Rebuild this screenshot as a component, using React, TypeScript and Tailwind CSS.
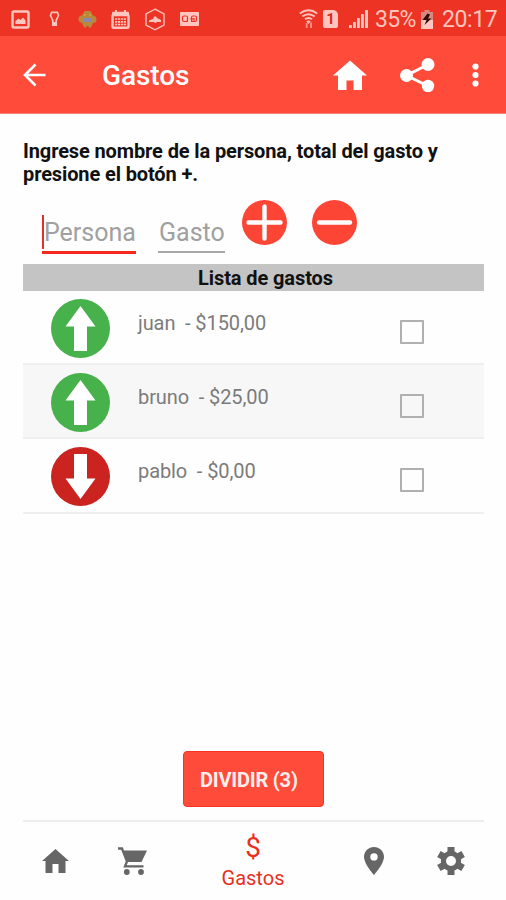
import { useState, type ReactNode } from 'react'
import clsx from 'clsx'

interface Expense {
  id: number
  name: string
  amount: string
  paid: boolean
}

const EXPENSES: Expense[] = [
  { id: 1, name: 'juan', amount: '$150,00', paid: true },
  { id: 2, name: 'bruno', amount: '$25,00', paid: true },
  { id: 3, name: 'pablo', amount: '$0,00', paid: false },
]

function StatusBar() {
  return (
    <div className="flex h-9 items-center bg-[#ed3323] pt-0.5 text-[#ffc5be]">
      {/* Notifications */}
      <svg className="ml-[11px] h-[19px] w-[19px]" viewBox="0 0 19 19">
        <rect x="1.5" y="1.5" width="16" height="16" rx="1.5" fill="none" stroke="currentColor" strokeWidth="2.4" />
        <path d="M4.5 14V11l3-2.5 2 1.5 2.5-2.5 2.5 3V14z" fill="currentColor" />
      </svg>
      <svg className="ml-[19px] h-4 w-[11px]" viewBox="0 0 11 16">
        <path d="M1.5 4.5 2.6 1.3h5.8l1.1 3.2-2.3 5v4.7H3.8V9.5z" fill="none" stroke="currentColor" strokeWidth="1.7" />
        <path d="M4 11h3v3H4z" fill="currentColor" />
      </svg>
      <svg className="ml-[18px] h-[19px] w-[19px]" viewBox="0 0 19 19">
        <path
          d="M6.5 1h6l2.500 4.500q3.500 0.500 3.500 4t-3.500 3.500l-2 4.500h-2.500V16h-2v1.500H6L4 13Q0.500 12.500 0.500 9T4 5.500z"
          fill="#b8893a"
        />
        <rect x="6" y="8" width="7" height="4" fill="#8d86ae" />
        <circle cx="7" cy="5" r="1" fill="#d7a63a" />
        <circle cx="12" cy="5" r="1" fill="#d7a63a" />
      </svg>
      <svg className="ml-[14px] h-[19px] w-[19px]" viewBox="0 0 19 19">
        <path
          d="M1 5.5V3q0-1.200 1.200-1.200H4V0h2v1.800h7V0h2v1.800h1.800Q18 1.800 18 3v2.500z"
          fill="currentColor"
        />
        <rect x="1.500" y="5" width="16" height="12.800" rx="1" fill="none" stroke="currentColor" strokeWidth="2.400" />
        <path d="M4 9h11M4 11.800h11M4 14.500h11" stroke="currentColor" strokeWidth="1.700" strokeDasharray="2.300 0.700" />
      </svg>
      <svg className="ml-[14px] h-[23px] w-[22px]" viewBox="0 0 22 23">
        <path d="M11 1.200 20 6v11l-9 4.800L2 17V6z" fill="none" stroke="currentColor" strokeWidth="1.400" />
        <path d="M5 12.500l4-1.500 1-2.500h2l1 1.500 4 2v2h-4l-1.500 1-2-1H5z" fill="currentColor" />
      </svg>
      <svg className="ml-[14px] h-[14px] w-[19px]" viewBox="0 0 19 14">
        <rect width="19" height="14" rx="0.800" fill="currentColor" />
        <g fill="none" stroke="#ed3323" strokeWidth="1.200">
          <rect x="2.500" y="4" width="5" height="5.500" rx="1.500" />
          <rect x="11.500" y="4" width="5" height="5.500" rx="1.500" />
          <path d="M5 9.500h3M11 9.500h3M14 6v3M10.500 6.800h4" />
        </g>
      </svg>

      {/* System icons */}
      <svg className="ml-auto h-5 w-[19px]" viewBox="0 0 19 20">
        <g fill="none" stroke="currentColor" strokeWidth="2">
          <path d="M0.800 4.500q8.700-6.500 17.400 0M3.300 7.500q6.200-4.600 12.400 0M6 10.300q3.500-2.600 7 0" />
        </g>
        <path d="M7.300 12.300q2.200-1.600 4.400 0L9.500 15z" fill="currentColor" />
        <path d="M7.700 14v5M12 13.500v5.500" stroke="currentColor" strokeWidth="2" opacity="0.600" />
      </svg>
      <div className="ml-[5px] flex h-[18px] w-[15px] items-center justify-center rounded-[2px] rounded-tr-[5px] bg-current">
        <span className="text-[15px] leading-none font-bold text-[#d92a1c]">1</span>
      </div>
      <svg className="ml-[11px] h-[18px] w-[19px]" viewBox="0 0 19 18">
        <path d="M0 15h2.800v3H0zM4 12h2.800v6H4zM8 8h2.800v10H8zM12 4h2.800v14H12zM16 0h3v18h-3z" fill="currentColor" />
      </svg>
      <span className="ml-[7px] w-[42px] text-[23px] leading-none tracking-[-0.700px]">35%</span>
      <svg className="ml-[4px] h-[19px] w-[12px]" viewBox="0 0 12 19">
        <path d="M3.500 0h5v2H12v8H0V2h3.500z" fill="#d8887e" />
        <path d="M0 10h12v9H0z" fill="currentColor" />
        <path d="M6.500 3.500 1.500 10h4L3.500 15l7-6.500H7l2-4z" fill="#2c0c08" />
      </svg>
      <span className="mr-[8px] ml-[9px] w-[56px] text-[23px] leading-none tracking-[-0.400px]">20:17</span>
    </div>
  )
}

function Header() {
  return (
    <header className="flex h-[78px] items-center border-b border-[#fb8175] bg-[#ff4b3a] text-white">
      <svg className="ml-[23px] h-6 w-6" viewBox="0 0 24 24">
        <path d="M12.500 1.500 2 12l10.500 10.500M2 12h20.500" fill="none" stroke="currentColor" strokeWidth="2.600" />
      </svg>
      <h1 className="ml-[55px] pt-[3px] text-[28px] leading-none font-medium tracking-[-0.100px]">Gastos</h1>
      <svg className="ml-auto h-[30px] w-[34px]" viewBox="0 0 34 30">
        <path d="M17 0.500 34 15.500h-5V30h-8.500V20.500h-7V30H5V15.500H0z" fill="currentColor" />
      </svg>
      <svg className="ml-[33px] h-[34px] w-[35px]" viewBox="0 0 35 34">
        <path d="M28 6.500 6.500 17.500 28 28" fill="none" stroke="currentColor" strokeWidth="3" />
        <circle cx="28" cy="6.500" r="6.500" fill="currentColor" />
        <circle cx="6.500" cy="17.500" r="6.500" fill="currentColor" />
        <circle cx="28" cy="28" r="6.200" fill="currentColor" />
      </svg>
      <svg className="mr-[27px] ml-[37px] h-6 w-[7px]" viewBox="0 0 7 24">
        <circle cx="3.500" cy="3.500" r="3.100" fill="currentColor" />
        <circle cx="3.500" cy="12" r="3.100" fill="currentColor" />
        <circle cx="3.500" cy="20.500" r="3.100" fill="currentColor" />
      </svg>
    </header>
  )
}

function RoundButton({ label, d }: { label: string; d: string }) {
  return (
    <button aria-label={label} className="h-[45px] w-[45px] shrink-0">
      <svg className="h-full w-full" viewBox="0 0 45 45">
        <circle cx="22.500" cy="22.500" r="22.500" fill="#fc4535" />
        <path d={d} stroke="#fff" strokeWidth="4.400" strokeLinecap="round" />
      </svg>
    </button>
  )
}

function ExpenseRow({ expense, checked, onToggle }: { expense: Expense; checked: boolean; onToggle: () => void }) {
  return (
    <li className="flex h-[74.200px] border-b-2 border-[#efefef] even:bg-[#f7f7f7]">
      <svg className={clsx('mt-[8px] ml-[28px] h-[59px] w-[59px]', !expense.paid && 'rotate-180')} viewBox="0 0 59 59">
        <circle cx="29.500" cy="29.500" r="29.500" fill={expense.paid ? '#47b14b' : '#cb231f'} />
        <path d="M29.500 7 44.500 27.500H36V52H23V27.500h-8.500z" fill="#fff" />
      </svg>
      <span className="mt-[20px] ml-[28px] w-[262px] text-[20px] leading-6 tracking-[-0.100px] whitespace-pre text-[#7b7b7b]">
        {expense.name}  - {expense.amount}
      </span>
      <button
        role="checkbox"
        aria-checked={checked}
        aria-label={expense.name}
        onClick={onToggle}
        className={clsx('mt-[29px] h-6 w-6 rounded-[1px] border-2 border-[#b0b0b0]', checked && 'bg-[#fc4535]')}
      />
    </li>
  )
}

function NavItem({ label, children }: { label: string; children: ReactNode }) {
  return (
    <button aria-label={label} className="flex w-[77px] items-center justify-center text-[#666]">
      {children}
    </button>
  )
}

export default function App() {
  const [selected, setSelected] = useState<number[]>([])

  const toggle = (id: number) => {
    setSelected(s => (s.includes(id) ? s.filter(x => x !== id) : [...s, id]))
  }

  return (
    <div className="flex h-[900px] w-[506px] flex-col overflow-hidden bg-[#fefefe] font-['Roboto',sans-serif]">
      <StatusBar />
      <Header />

      <main className="mr-[22px] ml-[23px] flex flex-1 flex-col">
        <p className="mt-[26px] text-[20px] leading-[23px] font-bold tracking-[-0.120px] whitespace-pre text-[#111]">
          Ingrese nombre de la persona, total del gasto y{'\n'}presione el botón +.
        </p>

        {/* New expense */}
        <div className="mt-[14px] flex h-[64px] items-start pl-[19px]">
          <div className="mt-[14px] flex h-[40px] w-[94px] items-start border-b-[3px] border-[#f5281e] text-[25px] leading-[38px] text-[#a0a0a0]">
            <span className="mt-[1px] h-[34px] w-[2px] shrink-0 bg-[#e0302c]" />
            <span>Persona</span>
          </div>
          <div className="mt-[14px] ml-[22px] h-[39px] w-[67px] border-b-2 border-[#a8a8a8] pl-[1px] text-[25px] leading-[38px] text-[#a0a0a0]">
            Gasto
          </div>
          <div className="ml-[17px] flex gap-[25px]">
            <RoundButton label="Agregar" d="M6.500 22.500h32M22.500 6.500v32" />
            <RoundButton label="Quitar" d="M7 22.500h31" />
          </div>
        </div>

        <h2 className="h-[27px] bg-[#c4c4c4] pl-[24px] text-center text-[20px] leading-[29px] font-bold tracking-[-0.100px] text-[#111]">
          Lista de gastos
        </h2>
        <ul>
          {EXPENSES.map(e => (
            <ExpenseRow key={e.id} expense={e} checked={selected.includes(e.id)} onToggle={() => toggle(e.id)} />
          ))}
        </ul>

        <button className="mt-auto mb-[13px] ml-[160px] h-[56px] w-[141px] rounded-[4px] border border-[#f73222] bg-[#ff4b3a] pt-[2px] pl-4 text-left text-[20px] font-bold tracking-[-0.200px] text-[#ffeeec]">
          DIVIDIR ({EXPENSES.length})
        </button>
        <div className="h-[2px] bg-[#ededed]" />
      </main>

      <nav className="flex h-[78px] pl-[17px]">
        <NavItem label="Inicio">
          <svg className="h-6 w-[27px]" viewBox="0 0 27 24">
            <path d="M13.500 0 27 12h-3.500v12h-7v-9h-6v9h-7V12H0z" fill="currentColor" />
          </svg>
        </NavItem>
        <NavItem label="Compras">
          <svg className="h-7 w-[29px]" viewBox="0 0 29 28">
            <path d="M0 1.500h4L9 14.500l-2 4.800h18.500" fill="none" stroke="currentColor" strokeWidth="2.300" />
            <path d="M4 3.500h25L23.500 15H9z" fill="currentColor" />
            <circle cx="8.800" cy="25" r="2.900" fill="currentColor" />
            <circle cx="23" cy="25" r="2.900" fill="currentColor" />
          </svg>
        </NavItem>
        <button className="flex w-[164px] flex-col items-center text-[#e8301f]">
          <span className="mt-[9px] text-[28px] leading-[34px]">$</span>
          <span className="mt-[1px] text-[20px] leading-6">Gastos</span>
        </button>
        <NavItem label="Lugares">
          <svg className="h-7 w-5" viewBox="0 0 20 28">
            <path
              d="M10 0C4.500 0 0 4.400 0 9.800 0 17 10 28 10 28s10-11 10-18.200C20 4.400 15.500 0 10 0zm0 6.200a3.700 3.700 0 1 1 0 7.400 3.700 3.700 0 0 1 0-7.400z"
              fill="currentColor"
            />
          </svg>
        </NavItem>
        <NavItem label="Ajustes">
          <svg className="h-7 w-7" viewBox="0 0 28 28">
            <circle cx="14" cy="14" r="7.600" fill="none" stroke="currentColor" strokeWidth="5.200" />
            <path
              d="M14 0v7M14 21v7M1.900 7 8 10.500M20 17.500l6.100 3.500M1.900 21 8 17.500M20 10.500 26.100 7"
              stroke="currentColor"
              strokeWidth="7"
            />
          </svg>
        </NavItem>
      </nav>
    </div>
  )
}
